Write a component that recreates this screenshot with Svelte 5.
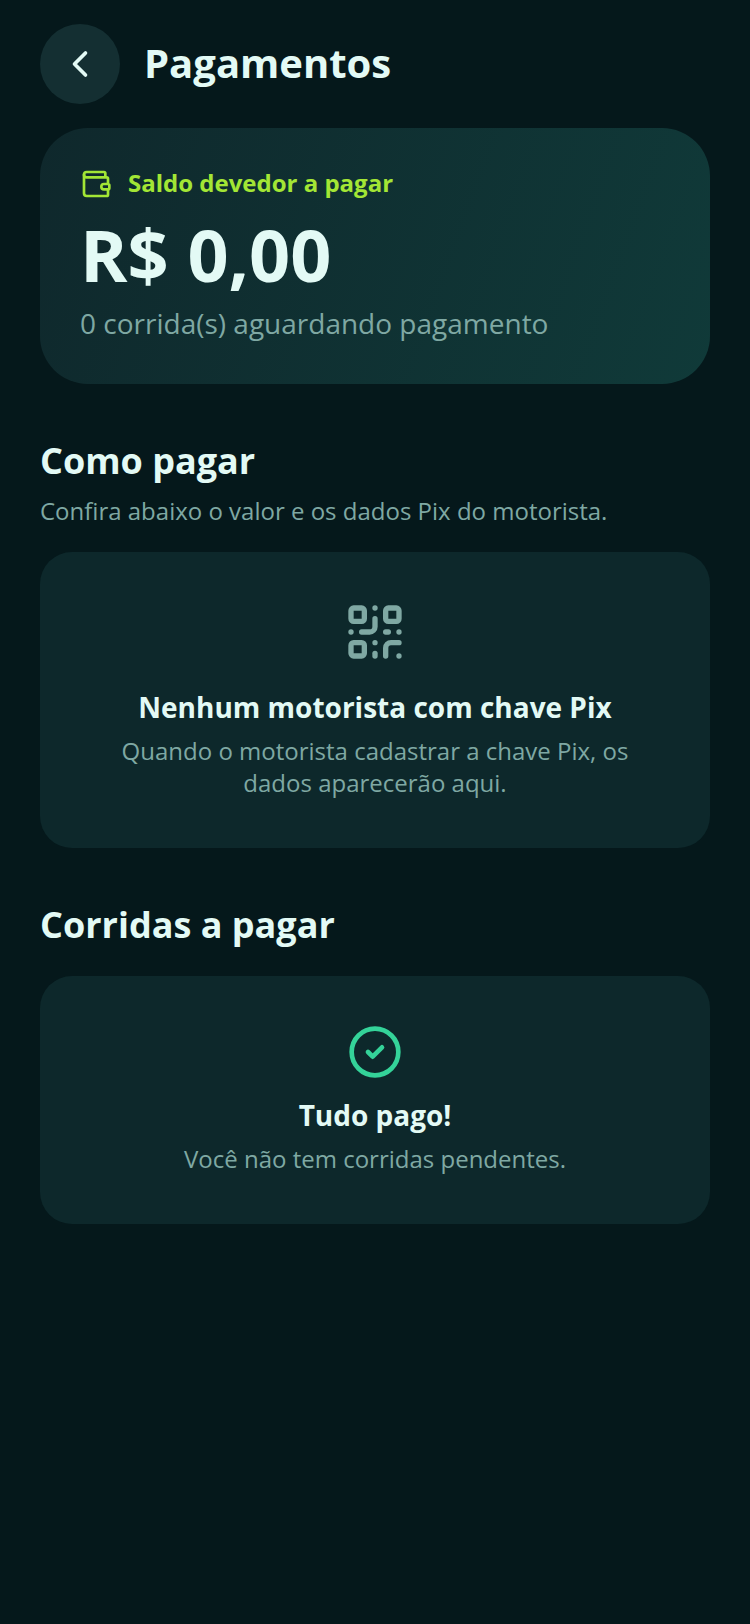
<script>
	let balance = $state(0);
	let pendingRides = $state([]);

	function formatMoney(value) {
		return "R$ " + value.toFixed(2).replace(".", ",");
	}

	function goBack() {
		history.back();
	}
</script>

<main class="page">
	<header class="topbar">
		<button class="back" aria-label="Voltar" onclick={goBack}>
			<svg class="icon" width="44" height="44" viewBox="0 0 24 24">
				<path d="m15 18-6-6 6-6" />
			</svg>
		</button>
		<h1>Pagamentos</h1>
	</header>

	<section class="balance">
		<div class="label">
			<svg class="icon" width="32" height="32" viewBox="0 0 24 24">
				<path d="M19 7V4a1 1 0 0 0-1-1H5a2 2 0 0 0 0 4h15a1 1 0 0 1 1 1v4h-3a2 2 0 0 0 0 4h3a1 1 0 0 0 1-1v-2a1 1 0 0 0-1-1" />
				<path d="M3 5v14a2 2 0 0 0 2 2h15a1 1 0 0 0 1-1v-4" />
			</svg>
			<span>Saldo devedor a pagar</span>
		</div>
		<p class="amount">{formatMoney(balance)}</p>
		<p class="waiting">{pendingRides.length} corrida(s) aguardando pagamento</p>
	</section>

	<section class="block">
		<h2>Como pagar</h2>
		<p class="hint">Confira abaixo o valor e os dados Pix do motorista.</p>
		<div class="card pix">
			<svg class="icon" width="64" height="64" viewBox="0 0 24 24">
				<rect x="3" y="3" width="5" height="5" rx="1" />
				<rect x="16" y="3" width="5" height="5" rx="1" />
				<rect x="3" y="16" width="5" height="5" rx="1" />
				<path d="M21 16h-3a2 2 0 0 0-2 2v3" />
				<path d="M21 21v.01" />
				<path d="M12 7v3a2 2 0 0 1-2 2H7" />
				<path d="M3 12h.01" />
				<path d="M12 3h.01" />
				<path d="M12 16v.01" />
				<path d="M16 12h1" />
				<path d="M21 12v.01" />
				<path d="M12 21v-1" />
			</svg>
			<h3>Nenhum motorista com chave Pix</h3>
			<p>Quando o motorista cadastrar a chave Pix, os dados aparecerão aqui.</p>
		</div>
	</section>

	<section class="block">
		<h2>Corridas a pagar</h2>
		<div class="card paid">
			<svg class="icon" width="56" height="56" viewBox="0 0 24 24">
				<circle cx="12" cy="12" r="10" />
				<path d="m9 12 2 2 4-4" />
			</svg>
			<h3>Tudo pago!</h3>
			<p>Você não tem corridas pendentes.</p>
		</div>
	</section>
</main>

<style>
	:global(body) {
		background: #05181b;
	}

	.page {
		box-sizing: border-box;
		min-height: 100vh;
		padding: 24px 40px;
		color: #e3faf5;
		font-family: "Open Sans", "Noto Sans", sans-serif;
	}

	h1, h2, h3, p {
		margin: 0;
		font-weight: 400;
	}

	.icon {
		display: block;
		flex: none;
		fill: none;
		stroke: currentColor;
		stroke-width: 2;
		stroke-linecap: round;
		stroke-linejoin: round;
	}

	.topbar {
		display: flex;
		align-items: center;
		gap: 24px;
		margin-bottom: 24px;
	}

	.back {
		display: flex;
		align-items: center;
		justify-content: center;
		width: 80px;
		height: 80px;
		padding: 0;
		border: none;
		border-radius: 50%;
		background: #142f32;
		color: inherit;
		cursor: pointer;
	}

	h1 {
		padding-bottom: 2px;
		font-size: 40px;
		line-height: 56px;
		font-weight: 700;
	}

	.balance {
		padding: 40px 40px 42px;
		border-radius: 48px;
		background: linear-gradient(110deg, #0f282c, #103a39);
	}

	.label {
		display: flex;
		align-items: flex-start;
		gap: 16px;
		color: #a3e635;
		font-size: 24px;
		line-height: 30px;
		font-weight: 700;
	}

	.amount {
		margin: 12px 0 8px;
		font-size: 72px;
		line-height: 84px;
		font-weight: 700;
	}

	.waiting {
		color: #7fa8a3;
		font-size: 28px;
		line-height: 38px;
	}

	.block {
		margin-top: 52px;
	}

	h2 {
		font-size: 36px;
		line-height: 50px;
		font-weight: 700;
	}

	.hint {
		margin-top: 8px;
		color: #7fa8a3;
		font-size: 24px;
		line-height: 34px;
	}

	.card {
		display: flex;
		flex-direction: column;
		align-items: center;
		margin-top: 26px;
		padding: 48px 48px 49px;
		border-radius: 32px;
		background: #0d282b;
		color: #7fa8a3;
		font-size: 24px;
		line-height: 32px;
		text-align: center;
	}

	.pix {
		margin-top: 24px;
	}

	.paid .icon {
		color: #34d399;
	}

	h3 {
		margin: 16px 0 9px;
		color: #e3faf5;
		font-size: 28px;
		line-height: 38px;
		font-weight: 700;
	}

	.pix h3 {
		margin-top: 24px;
	}
</style>
